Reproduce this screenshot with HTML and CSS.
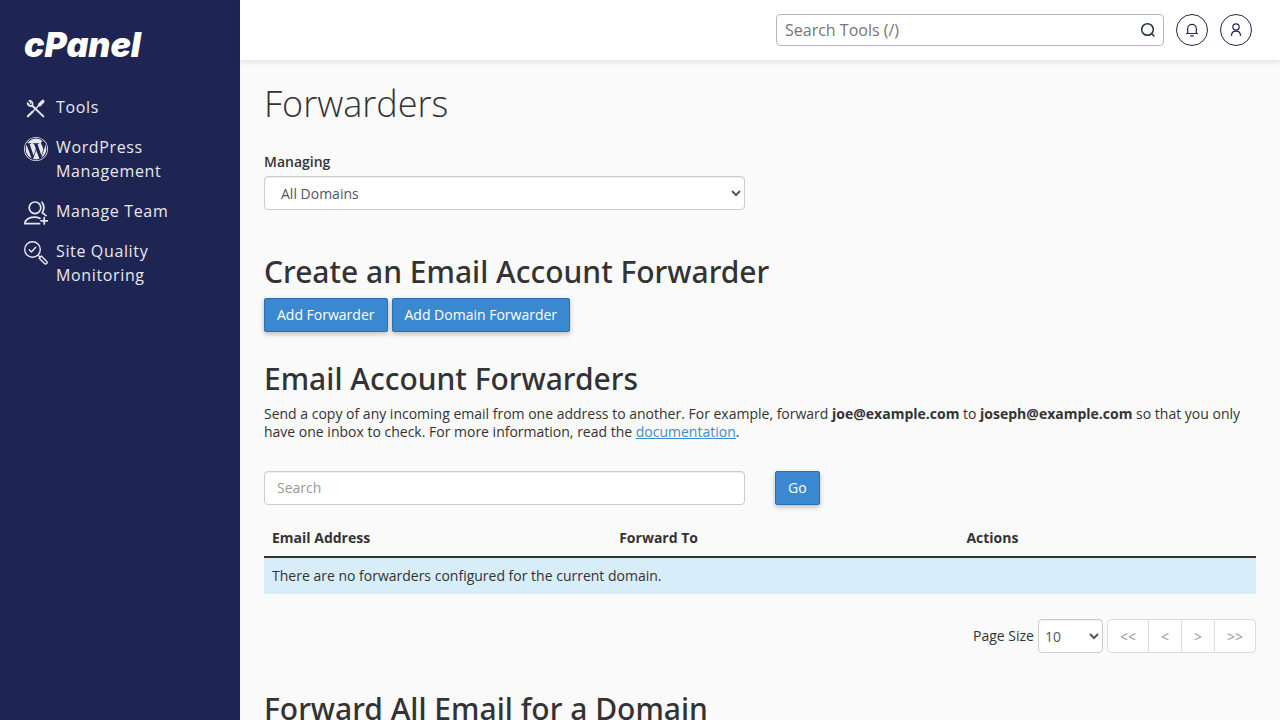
FILE: index.html
```html
<!DOCTYPE html>
<html lang="en">
<head>
    <meta charset="UTF-8">
    <meta name="viewport" content="width=device-width, initial-scale=1.0">
    <title>cPanel - Forwarders</title>
    <link rel="stylesheet" href="styles.css">
</head>
<body>
    <div class="layout">
        <nav class="sidebar">
            <a href="#" class="logo">cPanel</a>
            <ul class="nav-list">
                <li>
                    <a href="#" class="nav-link">
                        <svg class="nav-icon" viewBox="0 0 24 24" fill="none" stroke="currentColor" stroke-linecap="round">
                            <path d="M8.300 8.800L19.300 19.400" stroke-width="2"/>
                            <path d="M5.400 3.900C8.300 3.700 9.200 6.300 8.200 8.700 6.200 9.800 3.600 8.700 3.500 6" stroke-width="1.600"/>
                            <path d="M5.400 3.900L7 6.200 5.700 7.400 3.500 6" stroke-width="1" stroke-linejoin="round"/>
                            <path d="M3.900 19.300L8.300 15" stroke-width="2.200"/>
                            <path d="M8.300 15L15 8.200" stroke-width="1.300"/>
                            <path d="M15.600 7.800L18.900 4.400" stroke-width="3.400"/>
                        </svg>
                        <span>Tools</span>
                    </a>
                </li>
                <li>
                    <a href="#" class="nav-link">
                        <svg class="nav-icon" viewBox="0 0 24 24" fill="currentColor">
                            <path d="M12 0a12 12 0 1 0 0 24 12 12 0 0 0 0-24zm0 .8a11.200 11.200 0 1 1 0 22.400A11.200 11.200 0 0 1 12 .8z"/>
                            <path d="M1.700 12c0 4.100 2.400 7.600 5.800 9.300L2.600 7.800A10.200 10.200 0 0 0 1.700 12zm17.200-.5c0-1.300-.5-2.200-.9-2.900-.5-.8-1-1.600-1-2.500 0-1 .7-1.900 1.800-1.900h.1A10.300 10.300 0 0 0 3.400 6.300h.7c1.100 0 2.700-.1 2.700-.1.6 0 .7.800.1.900 0 0-.6.1-1.200.1l3.900 11.500 2.300-6.900L10.200 7.200c-.6 0-1.100-.1-1.100-.1-.6 0-.5-.9 0-.9 0 0 1.800.1 2.800.1 1.100 0 2.800-.1 2.800-.1.600 0 .6.800.1.900 0 0-.6.1-1.200.1l3.800 11.400 1.100-3.500c.5-1.500.8-2.500.8-3.400zm-6.700 1.400l-3.100 9a10.300 10.300 0 0 0 6.300-.2l-.1-.1zM21 7.100c.1.300.1.700.1 1.100 0 1-.2 2.200-.8 3.600l-3.100 9.100A10.300 10.300 0 0 0 21 7.100z"/>
                        </svg>
                        <span>WordPress Management</span>
                    </a>
                </li>
                <li>
                    <a href="#" class="nav-link">
                        <svg class="nav-icon" viewBox="0 0 24 24" fill="none" stroke="currentColor" stroke-width="1.700" stroke-linecap="round" stroke-linejoin="round">
                            <circle cx="11" cy="6.800" r="5.800"/>
                            <path d="M18 1.300c2.200 3.200 2.200 7.500.3 10.500l3.700 2.800M15.500 22.700H.9c0-3.900 4-6.500 9.200-6.500 2.500 0 4.500.4 6 1.200M20.200 16.500v6.500M17 19.800h6.500"/>
                        </svg>
                        <span>Manage Team</span>
                    </a>
                </li>
                <li>
                    <a href="#" class="nav-link">
                        <svg class="nav-icon" viewBox="0 0 24 24" fill="none" stroke="currentColor" stroke-width="1.400" stroke-linecap="round" stroke-linejoin="round">
                            <circle cx="8.500" cy="8.500" r="7.800"/>
                            <path d="M5.300 8.800l2.200 2.200 4.200-4.700M14.200 14.200l2 2M15.200 17.300l2.200-2.200 5.300 5.300c1.300 1.500-.8 3.500-2.200 2.200z"/>
                        </svg>
                        <span>Site Quality Monitoring</span>
                    </a>
                </li>
            </ul>
        </nav>

        <div class="page">
            <header class="topbar">
                <form class="tool-search">
                    <input type="text" class="tool-input" placeholder="Search Tools (/)" aria-label="Search Tools">
                    <button type="button" class="tool-btn" aria-label="Search">
                        <svg width="16" height="16" viewBox="0 0 16 16" fill="none" stroke="currentColor" stroke-width="1.500" stroke-linecap="round">
                            <circle cx="7.500" cy="7.500" r="5.800"/>
                            <path d="M11.700 11.700l2.300 2.300"/>
                        </svg>
                    </button>
                </form>
                <button type="button" class="round-btn" aria-label="Notifications">
                    <svg width="16" height="16" viewBox="0 0 16 16" fill="none" stroke="currentColor" stroke-width="1.200">
                        <path d="M2 11.500h12M3.700 11.500V6.700a4.300 4.300 0 0 1 8.600 0v4.800M6.200 13.800h3.600"/>
                    </svg>
                </button>
                <button type="button" class="round-btn" aria-label="Account">
                    <svg width="16" height="16" viewBox="0 0 16 16" fill="none" stroke="currentColor" stroke-width="1.200">
                        <circle cx="8" cy="5" r="3.200"/>
                        <path d="M3.500 14c0-3 1.700-4.800 4.500-4.800s4.500 1.800 4.500 4.800"/>
                    </svg>
                </button>
            </header>

            <main class="content">
                <h1>Forwarders</h1>

                <div class="managing">
                    <label for="domain">Managing</label>
                    <select id="domain" class="form-control domain-select">
                        <option>All Domains</option>
                    </select>
                </div>

                <section class="section">
                    <h2>Create an Email Account Forwarder</h2>
                    <div class="btn-row">
                        <button type="button" class="btn">Add Forwarder</button>
                        <button type="button" class="btn">Add Domain Forwarder</button>
                    </div>
                </section>

                <section class="section">
                    <h2>Email Account Forwarders</h2>
                    <p>Send a copy of any incoming email from one address to another. For example, forward <strong>joe@example.com</strong> to <strong>joseph@example.com</strong> so that you only have one inbox to check. For more information, read the <a href="#">documentation</a>.</p>

                    <form class="search-row">
                        <input type="text" class="form-control" placeholder="Search" aria-label="Search forwarders">
                        <button type="button" class="btn">Go</button>
                    </form>

                    <table class="table">
                        <thead>
                            <tr>
                                <th class="col-email">Email Address</th>
                                <th class="col-forward">Forward To</th>
                                <th>Actions</th>
                            </tr>
                        </thead>
                        <tbody>
                            <tr>
                                <td colspan="3">There are no forwarders configured for the current domain.</td>
                            </tr>
                        </tbody>
                    </table>

                    <div class="pager">
                        <label for="page-size">Page Size</label>
                        <select id="page-size" class="form-control size-select">
                            <option>10</option>
                            <option>20</option>
                            <option>50</option>
                        </select>
                        <div class="pager-group">
                            <button type="button" disabled>&lt;&lt;</button>
                            <button type="button" disabled>&lt;</button>
                            <button type="button" disabled>&gt;</button>
                            <button type="button" disabled>&gt;&gt;</button>
                        </div>
                    </div>
                </section>

                <section class="section">
                    <h2>Forward All Email for a Domain</h2>
                </section>
            </main>
        </div>
    </div>
</body>
</html>
```
FILE: styles.css
```css
* {
    box-sizing: border-box;
}

body {
    margin: 0;
    height: 100vh;
    overflow: hidden;
    font-family: "Open Sans", "Liberation Sans", sans-serif;
    font-size: 14px;
    line-height: 18px;
    color: #333;
    background-color: #fafafa;
}

button,
input,
select {
    font-family: inherit;
}

.layout {
    display: flex;
    height: 100%;
}

/* sidebar */
.sidebar {
    flex: 0 0 240px;
    padding: 24px;
    background-color: #1f2552;
}

.logo {
    display: block;
    font-family: Inter, "Open Sans", sans-serif;
    font-size: 34px;
    font-weight: 900;
    font-style: italic;
    line-height: 41px;
    color: #fff;
    text-decoration: none;
}

.nav-list {
    display: flex;
    flex-direction: column;
    gap: 16px;
    margin: 30px 0 0;
    padding: 0;
    list-style: none;
}

.nav-link {
    display: flex;
    gap: 8px;
    font-size: 16px;
    line-height: 24px;
    letter-spacing: 0.04em;
    color: #e8e8ec;
    text-decoration: none;
}

.nav-icon {
    flex: 0 0 24px;
    height: 24px;
    margin: 2px 0 -2px;
}

.page {
    flex: 1;
    min-width: 0;
}

/* top bar */
.topbar {
    display: flex;
    justify-content: flex-end;
    align-items: center;
    gap: 12px;
    height: 60px;
    padding: 0 28px;
    background-color: #fff;
    box-shadow: 0 2px 5px rgba(0, 0, 0, 0.1);
}

.tool-search {
    display: flex;
    width: 388px;
    height: 32px;
    border: 1px solid #b8b7c9;
    border-radius: 4px;
    background-color: #fff;
}

.tool-input {
    flex: 1;
    min-width: 0;
    padding: 0 8px;
    border: none;
    outline: none;
    background: none;
    font-size: 16px;
}

.tool-btn {
    display: flex;
    align-items: center;
    padding: 0 7px;
    border: none;
    background: none;
    color: #1d3344;
    cursor: pointer;
}

.round-btn {
    display: flex;
    justify-content: center;
    align-items: center;
    width: 32px;
    height: 32px;
    padding: 0;
    border: 1px solid #1f2552;
    border-radius: 50%;
    background-color: #fff;
    color: #1f2552;
    cursor: pointer;
}

/* content */
.content {
    padding: 20px 24px;
}

h1 {
    margin: 0;
    font-size: 36px;
    font-weight: 300;
    line-height: 48px;
}

h2 {
    margin: 0;
    font-family: "Noto Sans", "Open Sans", sans-serif;
    font-size: 30px;
    font-weight: 500;
    line-height: 34px;
}

p {
    margin: 9px 0 0;
}

a {
    color: #428bca;
}

.managing {
    margin-top: 25px;
}

.managing label {
    display: block;
    margin-bottom: 5px;
    font-weight: 600;
}

.form-control {
    width: 100%;
    height: 34px;
    padding: 6px 12px;
    border: 1px solid #ccc;
    border-radius: 4px;
    background-color: #fff;
    box-shadow: inset 0 1px 1px rgba(0, 0, 0, 0.075);
    font-size: 14px;
    color: #555;
}

.form-control::placeholder {
    color: #999;
}

.managing .domain-select {
    width: calc(50% - 15px);
}

.section {
    margin-top: 30px;
}

.managing + .section {
    margin-top: 45px;
}

.section:last-child {
    margin-top: 39px;
}

.btn-row {
    display: flex;
    gap: 4px;
    margin-top: 9px;
}

.btn {
    height: 34px;
    padding: 0 12px 2px;
    border: 1px solid #2a6fb0;
    border-radius: 2px;
    background-color: #3a89d0;
    box-shadow: 0 2px 5px rgba(0, 0, 0, 0.26);
    font-size: 14px;
    color: #fff;
    cursor: pointer;
}

.search-row {
    display: flex;
    gap: 30px;
    margin-top: 30px;
}

.search-row .form-control {
    width: calc(50% - 15px);
    padding: 5px 12px 7px;
}

.table {
    width: 100%;
    margin-top: 15px;
    border-collapse: collapse;
    table-layout: fixed;
}

.table th {
    padding: 9px 8px;
    border-bottom: 2px solid #333;
    font-weight: 700;
    text-align: left;
}

.table td {
    padding: 9px 8px;
    background-color: #d7edf9;
}

.col-email,
.col-forward {
    width: 35%;
}

.pager {
    display: flex;
    justify-content: flex-end;
    align-items: center;
    gap: 4px;
    margin-top: 25px;
}

.pager .size-select {
    width: 65px;
    padding: 6px 2px;
}

.pager-group {
    display: flex;
    border: 1px solid #ddd;
    border-radius: 4px;
    background-color: #fff;
    overflow: hidden;
}

.pager-group button {
    height: 32px;
    padding: 0 12px;
    border: none;
    background: none;
    font-size: 14px;
    color: #999;
}

.pager-group button + button {
    border-left: 1px solid #ddd;
}
```
